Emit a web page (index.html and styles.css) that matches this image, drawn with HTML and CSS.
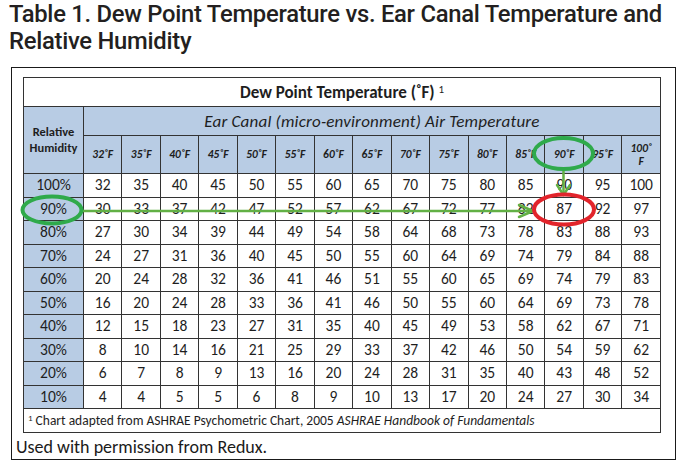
FILE: index.html
```html
<!DOCTYPE html>
<html>
<head>
<meta charset="utf-8">
<link rel="stylesheet" href="styles.css">
</head>
<body>
<h1 class="title">Table 1. Dew Point Temperature vs. Ear Canal Temperature and Relative Humidity</h1>
<div class="figure">
  <table class="dew">
    <colgroup>
      <col class="c-rh">
      <col span="15">
    </colgroup>
    <tr class="r-title"><th colspan="16" class="t-main">Dew Point Temperature (˚F) <sup>1</sup></th></tr>
    <tr class="r-ear">
      <th rowspan="2" class="blue rh-head">Relative<br>Humidity</th>
      <th colspan="15" class="blue ear">Ear Canal (micro-environment) Air Temperature</th>
    </tr>
    <tr class="r-temps">
      <th class="blue tmp">32˚F</th><th class="blue tmp">35˚F</th><th class="blue tmp">40˚F</th><th class="blue tmp">45˚F</th><th class="blue tmp">50˚F</th><th class="blue tmp">55˚F</th><th class="blue tmp">60˚F</th><th class="blue tmp">65˚F</th><th class="blue tmp">70˚F</th><th class="blue tmp">75˚F</th><th class="blue tmp">80˚F</th><th class="blue tmp">85˚F</th><th class="blue tmp">90˚F</th><th class="blue tmp">95˚F</th><th class="blue tmp">100˚<br>F</th>
    </tr>
    <tr class="r-data"><td class="blue rh">100%</td><td>32</td><td>35</td><td>40</td><td>45</td><td>50</td><td>55</td><td>60</td><td>65</td><td>70</td><td>75</td><td>80</td><td>85</td><td>90</td><td>95</td><td>100</td></tr>
    <tr class="r-data"><td class="blue rh">90%</td><td>30</td><td>33</td><td>37</td><td>42</td><td>47</td><td>52</td><td>57</td><td>62</td><td>67</td><td>72</td><td>77</td><td>82</td><td>87</td><td>92</td><td>97</td></tr>
    <tr class="r-data"><td class="blue rh">80%</td><td>27</td><td>30</td><td>34</td><td>39</td><td>44</td><td>49</td><td>54</td><td>58</td><td>64</td><td>68</td><td>73</td><td>78</td><td>83</td><td>88</td><td>93</td></tr>
    <tr class="r-data"><td class="blue rh">70%</td><td>24</td><td>27</td><td>31</td><td>36</td><td>40</td><td>45</td><td>50</td><td>55</td><td>60</td><td>64</td><td>69</td><td>74</td><td>79</td><td>84</td><td>88</td></tr>
    <tr class="r-data"><td class="blue rh">60%</td><td>20</td><td>24</td><td>28</td><td>32</td><td>36</td><td>41</td><td>46</td><td>51</td><td>55</td><td>60</td><td>65</td><td>69</td><td>74</td><td>79</td><td>83</td></tr>
    <tr class="r-data"><td class="blue rh">50%</td><td>16</td><td>20</td><td>24</td><td>28</td><td>33</td><td>36</td><td>41</td><td>46</td><td>50</td><td>55</td><td>60</td><td>64</td><td>69</td><td>73</td><td>78</td></tr>
    <tr class="r-data"><td class="blue rh">40%</td><td>12</td><td>15</td><td>18</td><td>23</td><td>27</td><td>31</td><td>35</td><td>40</td><td>45</td><td>49</td><td>53</td><td>58</td><td>62</td><td>67</td><td>71</td></tr>
    <tr class="r-data"><td class="blue rh">30%</td><td>8</td><td>10</td><td>14</td><td>16</td><td>21</td><td>25</td><td>29</td><td>33</td><td>37</td><td>42</td><td>46</td><td>50</td><td>54</td><td>59</td><td>62</td></tr>
    <tr class="r-data"><td class="blue rh">20%</td><td>6</td><td>7</td><td>8</td><td>9</td><td>13</td><td>16</td><td>20</td><td>24</td><td>28</td><td>31</td><td>35</td><td>40</td><td>43</td><td>48</td><td>52</td></tr>
    <tr class="r-data"><td class="blue rh">10%</td><td>4</td><td>4</td><td>5</td><td>5</td><td>6</td><td>8</td><td>9</td><td>10</td><td>13</td><td>17</td><td>20</td><td>24</td><td>27</td><td>30</td><td>34</td></tr>
    <tr class="r-foot"><td colspan="16" class="foot"><sup>1</sup> Chart adapted from ASHRAE Psychometric Chart, 2005 <i>ASHRAE Handbook of Fundamentals</i></td></tr>
  </table>
  <p class="credit">Used with permission from Redux.</p>
</div>
<svg class="marks" viewBox="0 0 695 472" width="695" height="472" aria-hidden="true">
  <g fill="none" stroke-linecap="round" stroke-linejoin="round">
    <path d="M82 211 H533" stroke="#62b045" stroke-width="2.5"/>
    <path d="M519 205 L533 211 L519 217" stroke="#62b045" stroke-width="2.5"/>
    <path d="M563.5 169 V195" stroke="#62b045" stroke-width="2.5"/>
    <path d="M557 185 L563.5 195 L570 185" stroke="#62b045" stroke-width="2.5"/>
    <ellipse cx="52" cy="210" rx="29.5" ry="13.5" stroke="#2faa4b" stroke-width="4"/>
    <ellipse cx="563.5" cy="153.5" rx="29.5" ry="15.5" stroke="#2faa4b" stroke-width="4"/>
    <ellipse cx="564" cy="209.5" rx="30" ry="15" stroke="#e2242b" stroke-width="4"/>
  </g>
</svg>
</body>
</html>
```

FILE: styles.css
```css
html, body {
  margin: 0;
  padding: 0;
  background: #ffffff;
}
body {
  position: relative;
  width: 695px;
  height: 472px;
  overflow: hidden;
}
.title {
  margin: 0;
  padding: 1px 0 0 9px;
  width: 680px;
  height: 56px;
  font-family: Roboto, "Liberation Sans", sans-serif;
  font-weight: 500;
  font-size: 23.8px;
  line-height: 27px;
  letter-spacing: -0.27px;
  color: #231f20;
  box-sizing: border-box;
}
.figure {
  margin: 11px 0 0 11px;
  width: 665px;
  height: 393px;
  box-sizing: border-box;
  border: 1px solid #1a1a1a;
  padding: 9px 0 0 11px;
}
.dew {
  width: 638px;
  table-layout: fixed;
  border-collapse: collapse;
  font-family: Carlito, Calibri, Lato, "Open Sans", sans-serif;
  color: #1e1e1e;
  border: 1.5px solid #555;
}
.c-rh {
  width: 60px;
}
.dew th, .dew td {
  border: 1px solid #333;
  padding: 0;
  text-align: center;
  vertical-align: middle;
}
.blue {
  background: #b8cce4;
}
.r-title {
  height: 29px;
}
.t-main {
  font-size: 17px;
  font-weight: 700;
  background: #ffffff;
}
.t-main sup {
  font-size: 11px;
  font-weight: 400;
  vertical-align: 5px;
}
.r-ear {
  height: 29px;
}
.ear {
  font-style: italic;
  font-weight: 400;
  font-size: 17px;
  letter-spacing: 0.2px;
}
.rh-head {
  font-size: 12.5px;
  font-weight: 700;
  line-height: 16px;
  padding-bottom: 8px;
}
.r-temps {
  height: 38px;
}
.tmp {
  font-size: 11.5px;
  font-weight: 700;
  font-style: italic;
  line-height: 13px;
}
.r-data {
  height: 23.5px;
}
.r-data td {
  font-size: 15.5px;
  line-height: 18px;
}
.r-foot {
  height: 24px;
}
.foot {
  text-align: left !important;
  padding-left: 4px !important;
  font-size: 13.5px;
  background: #ffffff;
}
.foot sup {
  font-size: 9px;
  vertical-align: 4px;
}
.credit {
  margin: 3px 0 0 -7px;
  font-family: Carlito, Calibri, Lato, "Open Sans", sans-serif;
  font-size: 18px;
  line-height: 22px;
  color: #1a1a1a;
}
.marks {
  position: absolute;
  left: 0;
  top: 0;
  pointer-events: none;
}
```
